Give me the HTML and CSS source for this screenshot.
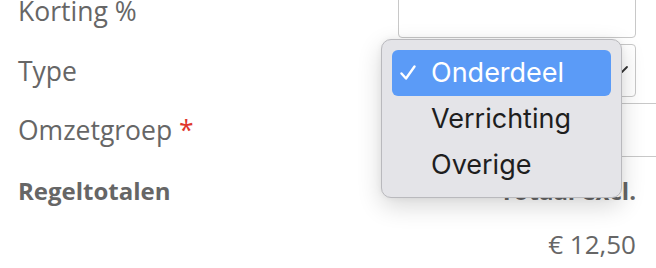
FILE: index.html
```html
<!DOCTYPE html>
<html lang="nl">

<head>
    <meta charset="UTF-8">
    <meta name="viewport" content="width=device-width, initial-scale=1.0">
    <title>regel bewerken</title>
    <link rel="stylesheet" href="styles.css">
</head>

<body>
    <div class="main">

        <!-- ----------- regel velden ---------------- -->

        <div class="form">
            <label class="lbl" for="korting">Korting %</label>
            <input class="field" type="text" id="korting">

            <label class="lbl" for="type">Type</label>
            <div class="field select-x" id="type">
                <svg class="chev" width="14" height="10" viewBox="0 0 14 10">
                    <path d="M2 2 L7 7 L12 2" fill="none" stroke="#333" stroke-width="1.8" stroke-linecap="round" stroke-linejoin="round"/>
                </svg>
            </div>

            <label class="lbl" for="omzetgroep">Omzetgroep <span class="req">*</span></label>
            <div class="field wide-x" id="omzetgroep"></div>
        </div>

        <!-- ----------- totalen ---------------- -->

        <div class="totals">
            <div class="tot-row">
                <span class="head">Regeltotalen</span>
                <span class="head">Totaal excl.</span>
            </div>
            <div class="tot-row amount">
                <span></span>
                <span>&euro; 12,50</span>
            </div>
        </div>

        <!-- ----------- open keuzelijst ---------------- -->

        <div class="popup">
            <div class="opt active">
                <svg class="check" width="16" height="16" viewBox="0 0 16 16">
                    <path d="M1.5 8.5 L6 13.5 L14.5 1.5" fill="none" stroke="#fff" stroke-width="2.4" stroke-linecap="round" stroke-linejoin="round"/>
                </svg>Onderdeel
            </div>
            <div class="opt">Verrichting</div>
            <div class="opt">Overige</div>
        </div>

    </div>
</body>

</html>
```

FILE: styles.css
```css
* {
    box-sizing: border-box;
    padding: 0%;
    margin: 0%;
}

body {
    width: 656px;
    height: 268px;
    overflow: hidden;
    background: #fff;
    font-family: "Open Sans", "Noto Sans", sans-serif;
    color: #666;
}

.main {
    position: relative;
    display: flow-root;
    height: 268px;
    padding: 0 20px 0 18px;
}

.form {
    display: grid;
    grid-template-columns: 1fr 238px;
    row-gap: 6px;
    align-items: center;
    margin-top: -16px;
}

.lbl {
    font-size: 26.5px;
    line-height: 36px;
}

.req {
    color: #e0352b;
}

.field {
    height: 54px;
    border: 1px solid #c8c8c8;
    border-radius: 4px;
    background: #fff;
}

.select-x {
    height: 53px;
    position: relative;
}

.chev {
    position: absolute;
    right: 6px;
    top: 20px;
}

.wide-x {
    border-left: none;
    border-right: none;
    border-radius: 0;
    margin-right: -40px;
}

.totals {
    margin-top: 17px;
}

.tot-row {
    display: flex;
    justify-content: space-between;
    line-height: 34px;
}

.head {
    font-size: 24px;
    font-weight: 700;
}

.amount {
    margin-top: 19px;
    font-size: 26px;
}

/* macOS style native dropdown */
.popup {
    position: absolute;
    left: 381px;
    top: 39px;
    width: 241px;
    height: 159px;
    padding: 10px;
    background: #e4e4e8;
    border: 1px solid #b9b9bd;
    border-radius: 10px;
    box-shadow: 0 8px 24px rgba(0, 0, 0, 0.16), 0 0 6px rgba(0, 0, 0, 0.06);
    font-family: Inter, Roboto, sans-serif;
    font-size: 27px;
    color: #1e1e1e;
}

.opt {
    height: 46px;
    line-height: 46px;
    padding-left: 39px;
    border-radius: 6px;
    position: relative;
}

.opt.active {
    background: #5b9bf7;
    color: #fff;
}

.check {
    position: absolute;
    left: 8px;
    top: 15px;
}
```
